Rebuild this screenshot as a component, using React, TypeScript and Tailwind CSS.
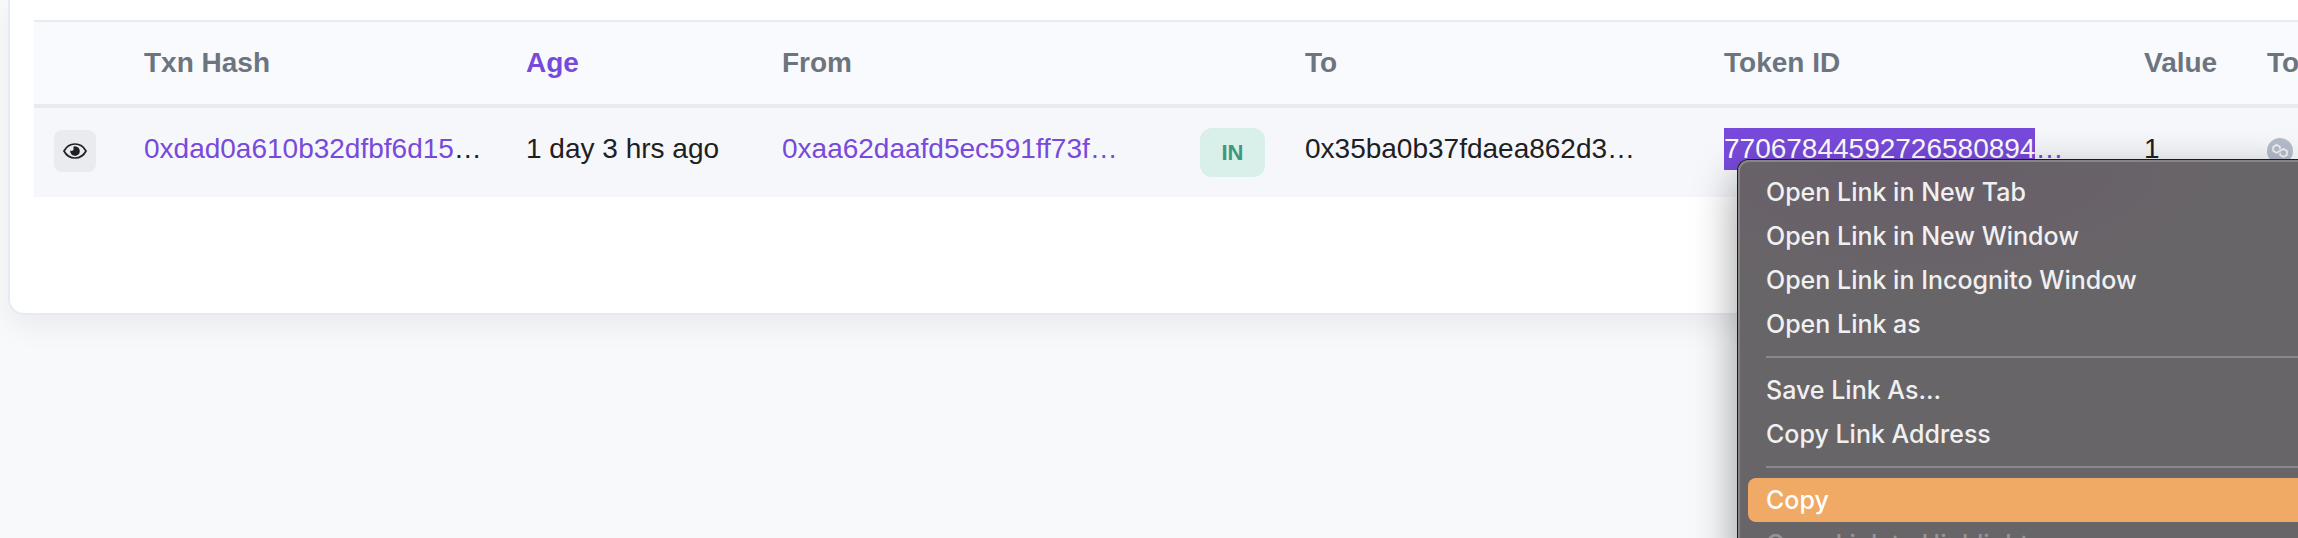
const menuGroups = [
    [
        { label: "Open Link in New Tab" },
        { label: "Open Link in New Window" },
        { label: "Open Link in Incognito Window" },
        { label: "Open Link as" },
    ],
    [{ label: "Save Link As..." }, { label: "Copy Link Address" }],
    [{ label: "Copy", active: true }, { label: "Copy Link to Highlight", disabled: true }],
];

function EyeIcon() {
    return (
        <svg viewBox="0 0 24 16" className="w-6 h-4" aria-hidden="true">
            <path
                d="M1 8C3.2 3.8 7.2 1 12 1s8.8 2.8 11 7c-2.2 4.2-6.2 7-11 7S3.2 12.2 1 8z"
                fill="none"
                stroke="currentColor"
                strokeWidth="1.7"
                strokeLinejoin="round"
            />
            <path
                d="M12 3.3a4.8 4.8 0 1 1-4.7 3.9a1.9 1.9 0 0 0 3.2-2a1.9 1.9 0 0 0-.3-1.5A4.8 4.8 0 0 1 12 3.3z"
                fill="currentColor"
            />
        </svg>
    );
}

function PolygonIcon() {
    return (
        <svg viewBox="0 0 26 26" className="w-[26px] h-[26px]" aria-hidden="true">
            <circle cx="13" cy="13" r="13" fill="#b4bbca" />
            <path
                transform="translate(5.4 6.2) scale(0.4)"
                fill="#f1f3f7"
                stroke="#f1f3f7"
                strokeWidth="0.8"
                d="M29,10.2c-0.7-0.4-1.6-0.4-2.4,0L21,13.5l-3.8,2.1l-5.5,3.3c-0.7,0.4-1.6,0.4-2.4,0L5,16.3c-0.7-0.4-1.2-1.2-1.2-2.1v-5c0-0.8,0.4-1.6,1.2-2.1l4.3-2.5c0.7-0.4,1.6-0.4,2.4,0L16,7.2c0.7,0.4,1.2,1.2,1.2,2.1v3.3l3.8-2.2V7c0-0.8-0.4-1.6-1.2-2.1l-8-4.7c-0.7-0.4-1.6-0.4-2.4,0L1.2,5C0.4,5.4,0,6.2,0,7v9.4c0,0.8,0.4,1.6,1.2,2.1l8.1,4.7c0.7,0.4,1.6,0.4,2.4,0l5.5-3.2l3.8-2.2l5.5-3.2c0.7-0.4,1.6-0.4,2.4,0l4.3,2.5c0.7,0.4,1.2,1.2,1.2,2.1v5c0,0.8-0.4,1.6-1.2,2.1L29,28.8c-0.7,0.4-1.6,0.4-2.4,0l-4.3-2.5c-0.7-0.4-1.2-1.2-1.2-2.1V21l-3.8,2.2v3.3c0,0.8,0.4,1.6,1.2,2.1l8.1,4.7c0.7,0.4,1.6,0.4,2.4,0l8.1-4.7c0.7-0.4,1.2-1.2,1.2-2.1V17c0-0.8-0.4-1.6-1.2-2.1L29,10.2z"
            />
        </svg>
    );
}

function TransfersTable() {
    return (
        <table className="w-full table-fixed border-separate border-spacing-0 text-left text-[28px] leading-[42px] whitespace-nowrap">
            <colgroup>
                <col className="w-[90px]" />
                <col className="w-[382px]" />
                <col className="w-[256px]" />
                <col className="w-[418px]" />
                <col className="w-[105px]" />
                <col className="w-[419px]" />
                <col className="w-[420px]" />
                <col className="w-[123px]" />
                <col />
            </colgroup>
            <thead className="bg-[#f9fafe] text-[#6c757e]">
                <tr className="h-[88px] [&>*]:border-t-2 [&>*]:border-b-4 [&>*]:border-[#e7eaf3]">
                    <td />
                    <th className="px-5">Txn Hash</th>
                    <th className="px-5">
                        <a href="#age" className="text-[#784adb]">
                            Age
                        </a>
                    </th>
                    <th className="px-5">From</th>
                    <td />
                    <th className="px-5">To</th>
                    <th className="px-5">Token ID</th>
                    <th className="px-5">Value</th>
                    <th className="pl-5 overflow-hidden">Token</th>
                </tr>
            </thead>
            <tbody>
                <tr className="bg-[#f6f7fb] text-[#1e2022] [&>td]:align-top [&>td]:py-5">
                    <td className="pl-5">
                        <button
                            aria-label="Preview transaction"
                            className="flex items-center justify-center w-[42px] h-[42px] mt-[2px] rounded-lg bg-[#e9ebef]">
                            <EyeIcon />
                        </button>
                    </td>
                    <td className="px-5">
                        <a href="#txn" className="text-[#784adb]">
                            0xdad0a610b32dfbf6d15
                        </a>
                        …
                    </td>
                    <td className="px-5">1 day 3 hrs ago</td>
                    <td className="px-5">
                        <a href="#from" className="text-[#784adb]">
                            0xaa62daafd5ec591ff73f…
                        </a>
                    </td>
                    <td className="px-5">
                        <span className="flex items-center justify-center w-[65px] h-[49px] rounded-xl bg-[#d8efea] text-[22px] font-bold text-[#3d987c]">
                            IN
                        </span>
                    </td>
                    <td className="px-5">0x35ba0b37fdaea862d3…</td>
                    <td className="px-5">
                        <a href="#token" className="flex text-[#784adb]">
                            <span className="bg-[#784adb] text-white">77067844592726580894</span>…
                        </a>
                    </td>
                    <td className="px-5">1</td>
                    <td className="pl-5">
                        <div className="flex pt-[10px]">
                            <PolygonIcon />
                        </div>
                    </td>
                </tr>
            </tbody>
        </table>
    );
}

function ContextMenu() {
    return (
        <div
            role="menu"
            className="absolute left-[1737px] right-0 top-[159px] rounded-tl-xl border-t border-l border-[#1b1a1c] bg-[#686568] shadow-[0_16px_44px_rgba(0,0,0,0.4)]">
            <div className="flex flex-col rounded-tl-[11px] border-t-2 border-l-2 border-[#868486] bg-[radial-gradient(300px_130px_at_180px_0,#685e69,#686568)] pt-2 pl-2 font-[Inter,sans-serif] text-[25px] leading-[44px] font-medium">
                {menuGroups.map((group, i) => (
                    <div key={i} className="flex flex-col">
                        {i > 0 && <div className="h-[2px] ml-[18px] my-[10px] bg-[#8a888b]" />}
                        {group.map((item) => (
                            <button
                                key={item.label}
                                role="menuitem"
                                disabled={item.disabled}
                                className={
                                    item.active
                                        ? "rounded-l-lg bg-[#f0aa65] pl-[18px] text-left text-white"
                                        : "pl-[18px] text-left text-[#f1f0f1] disabled:text-[#969497]"
                                }>
                                {item.label}
                            </button>
                        ))}
                    </div>
                ))}
            </div>
        </div>
    );
}

export default function App() {
    return (
        <div className="relative min-h-screen overflow-hidden bg-[#f8f9fb] font-['Liberation_Sans',Arial,sans-serif]">
            {/* Transfers card */}
            <div className="ml-2 rounded-bl-2xl border-l-2 border-b-2 border-[#e7eaf3] bg-white pt-5 pb-[116px] pl-6 shadow-[0_12px_30px_rgba(18,23,35,0.06)]">
                <TransfersTable />
            </div>

            <ContextMenu />
        </div>
    );
}
